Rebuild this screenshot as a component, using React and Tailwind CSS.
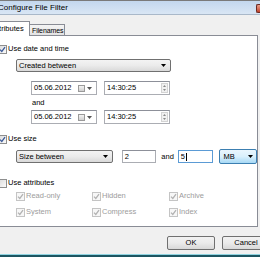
import React from "react";

function Check({ checked, disabled }) {
  return (
    <span
      className={
        "flex h-[9px] w-[9px] shrink-0 items-center justify-center border " +
        (disabled ? "border-[#c4c4c4] bg-[#f7f7f7]" : "border-[#8e8f8f] bg-gradient-to-br from-[#dcdcdc] to-[#fbfbfb]")
      }
    >
      {checked && (
        <svg width="7" height="7" viewBox="0 0 7 7">
          <path
            d="M1 3.6 L2.8 5.4 L6 1.2"
            fill="none"
            stroke={disabled ? "#b2b2b2" : "#3b5a9a"}
            strokeWidth="1.3"
          />
        </svg>
      )}
    </span>
  );
}

function Arrow({ color = "#000" }) {
  return (
    <svg width="5" height="3" viewBox="0 0 5 3">
      <path d="M0 0 H5 L2.5 3 Z" fill={color} />
    </svg>
  );
}

function DateBox() {
  return (
    <div className="flex h-[14px] w-[66px] items-center border border-[#abadb3] border-t-[#8d9099] bg-white pl-[2px] pr-[4px]">
      <span className="flex-1">05.06.2012</span>
      <span className="h-[7px] w-[7px] border border-[#9a9a9a] bg-gradient-to-b from-[#f4f4f4] to-[#d0d0d0]" />
      <span className="ml-[2px]">
        <Arrow color="#555" />
      </span>
    </div>
  );
}

function TimeBox() {
  return (
    <div className="ml-[7px] flex h-[14px] w-[66px] items-center border border-[#abadb3] border-t-[#8d9099] bg-white pl-[2px] pr-[1px]">
      <span className="flex-1">14:30:25</span>
      <div className="flex h-[10px] w-[7px] flex-col border border-[#d3d3d3] bg-[#f1f1f1]">
        <div className="flex flex-1 items-center justify-center">
          <svg width="3" height="2" viewBox="0 0 3 2">
            <path d="M0 2 H3 L1.5 0 Z" fill="#8a8a8a" />
          </svg>
        </div>
        <div className="flex flex-1 items-center justify-center">
          <svg width="3" height="2" viewBox="0 0 3 2">
            <path d="M0 0 H3 L1.5 2 Z" fill="#8a8a8a" />
          </svg>
        </div>
      </div>
    </div>
  );
}

function Button({ children, className }) {
  return (
    <div
      className={
        "flex h-[14px] w-[48px] items-center justify-center rounded-[2px] border border-[#707070] bg-gradient-to-b from-[#f2f2f2] via-[#ebebeb] to-[#d8d8d8] " +
        className
      }
    >
      {children}
    </div>
  );
}

export default function App() {
  return (
    <div
      className="flex h-[257px] w-[260px] flex-col overflow-hidden bg-[#f0f0f0] text-[7.5px] leading-none text-black"
      style={{ fontFamily: '"Liberation Sans", Arial, sans-serif' }}
    >
      {/* title bar */}
      <div className="flex h-[15px] shrink-0 items-center justify-between border-t border-[#7a7a7a] border-b border-b-[#a9b8c9] bg-gradient-to-b from-[#c3d7ee] to-[#d9e6f4]">
        <span className="-ml-[2px] pt-[1px] text-[8px]">Configure File Filter</span>
        <span className="mt-[2px] h-[9px] w-[4px] rounded-l-[2px] border border-r-0 border-[#6d2a22] bg-gradient-to-b from-[#e9a08c] to-[#c2412c]" />
      </div>

      {/* tabs */}
      <div className="flex h-[20px] shrink-0 items-end">
        <div className="relative z-10 -mb-px -ml-[14px] flex h-[15px] w-[44px] items-center border border-b-0 border-[#898c95] bg-white pb-[1px] pl-[5px]">
          Attributes
        </div>
        <div className="flex h-[11px] w-[35px] items-center border border-b-0 border-l-0 border-[#898c95] bg-gradient-to-b from-[#f4f4f4] to-[#e3e3e3] pl-[2px] text-[7px] tracking-[-0.1px]">
          Filenames
        </div>
      </div>

      {/* page */}
      <div className="-ml-px mr-[2px] flex h-[192px] shrink-0 flex-col border border-[#898c95] bg-white">
        <div className="mt-[8px] flex h-[10px] items-center">
          <span className="-ml-[2px]">
            <Check checked />
          </span>
          <span className="ml-[1px]">Use date and time</span>
        </div>

        <div className="ml-[16px] mt-[5px] flex h-[13px] w-[155px] items-center rounded-[2px] border border-[#707070] bg-gradient-to-b from-[#f3f3f3] via-[#ebebeb] to-[#d9d9d9] pl-[2px] pr-[4px]">
          <span className="flex-1">Created between</span>
          <Arrow />
        </div>

        <div className="ml-[31px] mt-[9px] flex">
          <DateBox />
          <TimeBox />
        </div>
        <div className="ml-[32px] mt-[3px] flex h-[10px] items-center">and</div>
        <div className="ml-[31px] mt-[2px] flex">
          <DateBox />
          <TimeBox />
        </div>

        <div className="mt-[10px] flex h-[10px] items-center">
          <span className="-ml-[2px]">
            <Check checked />
          </span>
          <span className="ml-[1px]">Use size</span>
        </div>

        <div className="mt-[5px] flex h-[15px] items-center">
          <div className="ml-[16px] flex h-[13px] w-[98px] items-center rounded-[2px] border border-[#707070] bg-gradient-to-b from-[#f3f3f3] via-[#ebebeb] to-[#d9d9d9] pl-[2px] pr-[4px]">
            <span className="flex-1">Size between</span>
            <Arrow />
          </div>
          <div className="ml-[9px] flex h-[13px] w-[35px] items-center border border-[#abadb3] border-t-[#8d9099] bg-white pl-[2px]">
            2
          </div>
          <span className="ml-[5px]">and</span>
          <div className="ml-[4px] flex h-[13px] w-[36px] items-center border border-[#5b9bd5] bg-white pl-[2px]">
            5<span className="ml-px h-[8px] w-px bg-black" />
          </div>
          <div className="ml-[6px] flex h-[15px] w-[38px] items-center rounded-[2px] border border-[#3c7fb1] bg-gradient-to-b from-[#eaf6fd] via-[#d9f0fc] to-[#a7d9f5] pl-[3px] pr-[3px]">
            <span className="flex-1">MB</span>
            <Arrow />
          </div>
        </div>

        <div className="mt-[14px] flex h-[10px] items-center">
          <span className="-ml-[2px]">
            <Check />
          </span>
          <span className="ml-[1px]">Use attributes</span>
        </div>

        <div className="ml-[16px] mt-[3px] grid grid-cols-[76px_77px_60px] gap-y-[6px] text-[#9c9c9c]">
          {["Read-only", "Hidden", "Archive", "System", "Compress", "Index"].map((t) => (
            <div key={t} className="flex h-[10px] items-center">
              <Check checked disabled />
              <span className="ml-[1px]">{t}</span>
            </div>
          ))}
        </div>
      </div>

      {/* buttons */}
      <div className="flex flex-1 items-start justify-end pt-[9px]">
        <Button>OK</Button>
        <Button className="-mr-[10px] ml-[7px]">Cancel</Button>
      </div>
      <div className="h-[3px] shrink-0 border-t border-[#8fd3e0] bg-[#1d5561]" />
    </div>
  );
}
